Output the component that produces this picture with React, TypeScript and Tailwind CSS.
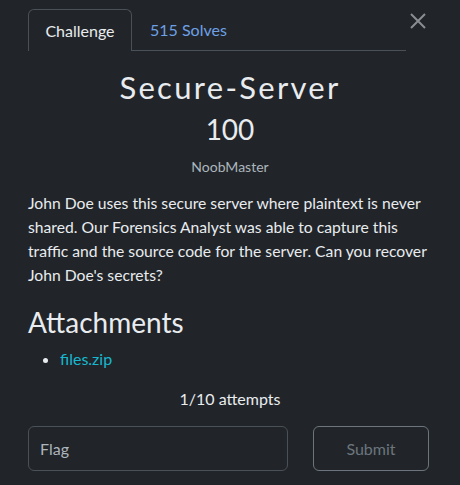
export default function App() {
  return (
    <div
      className="min-h-[485px] w-full bg-[#212529] text-[#e9ecef]"
      style={{ fontFamily: "Lato, 'Liberation Sans', sans-serif" }}
    >
      <div className="relative px-[28px] pt-[9px]">
        <button className="absolute right-[34px] top-[13px] text-[#8a8d91]" aria-label="Close">
          <svg width="16" height="16" viewBox="0 0 16 16" fill="none" stroke="currentColor" strokeWidth="2">
            <path d="M1 1L15 15M15 1L1 15" />
          </svg>
        </button>

        <div className="mr-[26px] flex border-b border-[#495057]">
          <div className="-mb-px flex h-[42px] w-[104px] items-center justify-center rounded-t-[6px] border border-b-0 border-[#495057] bg-[#212529] text-[16px] text-[#e9ecef]">
            Challenge
          </div>
          <div className="flex h-[41px] items-center px-[18px] text-[16px] text-[#6ea0e6]">515 Solves</div>
        </div>

        <div className="mt-[16px] text-center">
          <h2 className="text-[31px] leading-[40px] tracking-[2.3px] text-[#e9ecef]">Secure-Server</h2>
          <div className="mt-[5px] text-[28px] leading-[34px] text-[#e9ecef]">100</div>
          <div className="mt-[11px] text-[14px] leading-[20px] text-[#adb5bd]">NoobMaster</div>
        </div>

        <p className="mt-[14px] text-[15.7px] leading-[24px] text-[#e9ecef]">
          John Doe uses this secure server where plaintext is never shared. Our Forensics Analyst was able to
          capture this traffic and the source code for the server. Can you recover John Doe's secrets?
        </p>

        <h3 className="mt-[18px] text-[28px] leading-[34px] text-[#e9ecef]">Attachments</h3>
        <ul className="mt-[8px] list-disc pl-[32px] text-[16px] leading-[24px] marker:text-[#e9ecef]">
          <li>
            <a href="#" className="text-[#17b8cf]">
              files.zip
            </a>
          </li>
        </ul>

        <div className="mt-[16px] text-center text-[16px] leading-[24px] text-[#e9ecef]">1/10 attempts</div>

        <div className="mt-[15px] flex gap-[25px] pr-[3px]">
          <input
            placeholder="Flag"
            className="h-[45px] w-[260px] rounded-[6px] border border-[#495057] bg-transparent px-[11px] text-[16px] text-[#e9ecef] outline-none placeholder:text-[#adb5bd]"
          />
          <button className="h-[45px] flex-1 rounded-[6px] border border-[#6c757d] text-[16px] text-[#6c757d]">
            Submit
          </button>
        </div>
      </div>
    </div>
  );
}
